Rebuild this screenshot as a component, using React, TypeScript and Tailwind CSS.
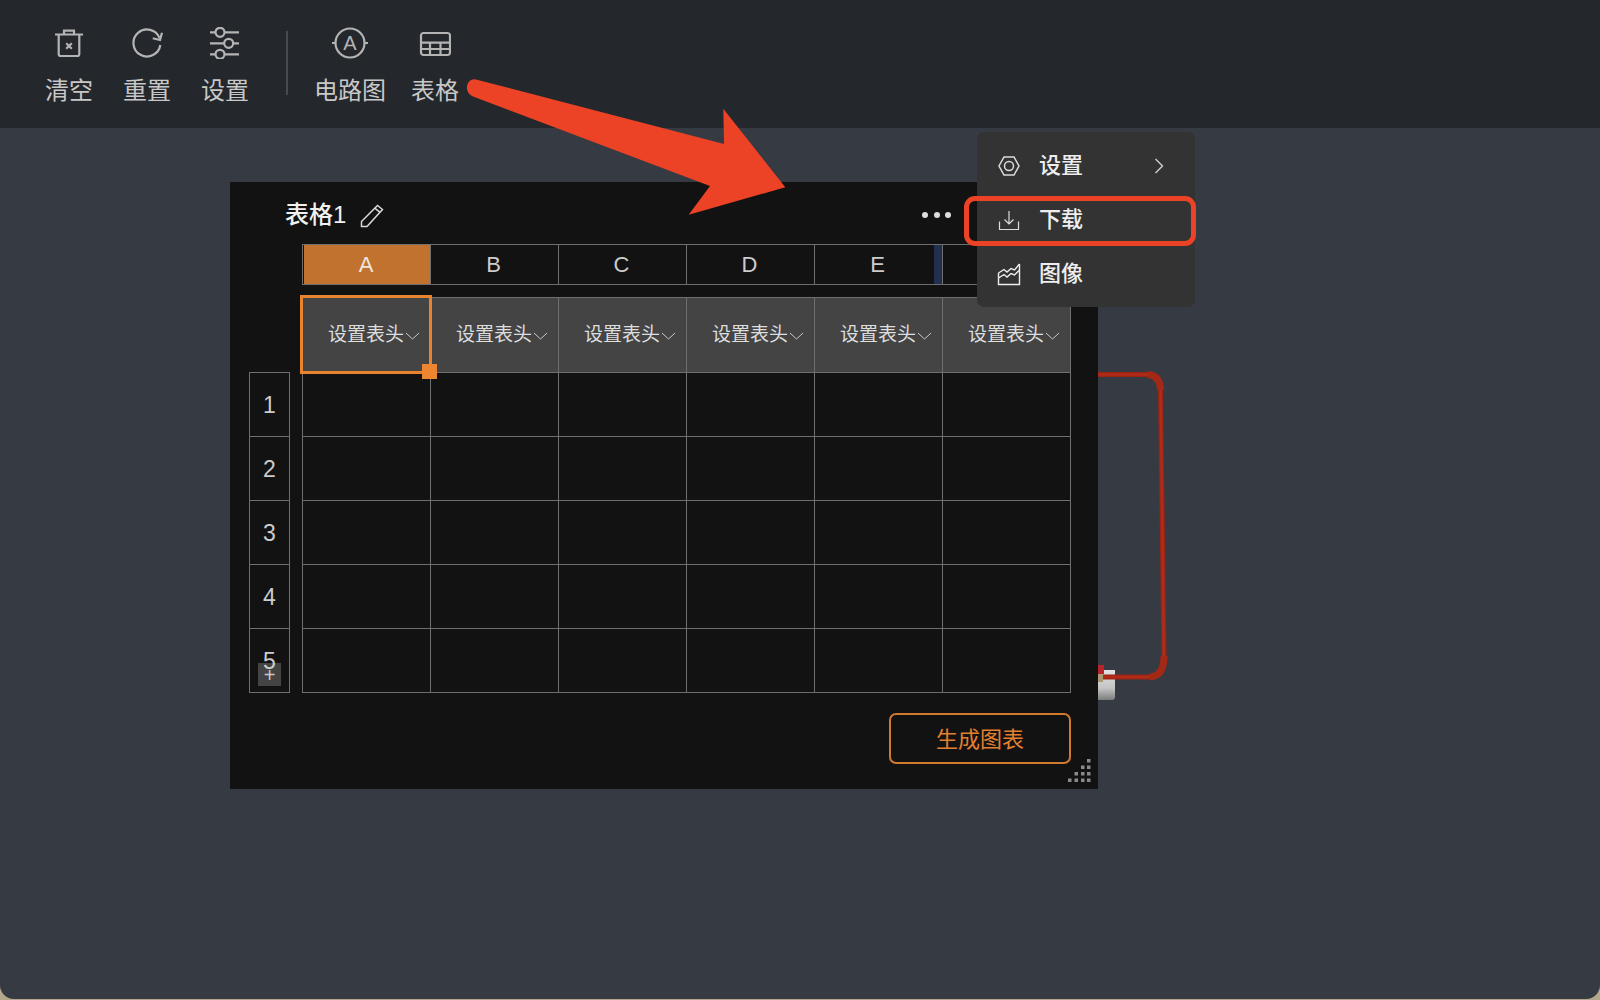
const columns = ['A', 'B', 'C', 'D', 'E', 'F']
const rows = [1, 2, 3, 4, 5]

const ToolbarIcon = {
  trash: (
    <svg width="32" height="32" viewBox="0 0 32 32" fill="none" stroke="#b4b4b4" strokeWidth="2.200">
      <path d="M2 7.500H30M11 7V3.600h10V7M5.700 7.500V27a2 2 0 0 0 2 2h16.600a2 2 0 0 0 2-2V7.500" />
      <path d="M13.200 16.200l5.600 5.600m0-5.600l-5.600 5.600" />
    </svg>
  ),
  reset: (
    <svg width="32" height="32" viewBox="0 0 32 32" fill="none" stroke="#b4b4b4" strokeWidth="2.200">
      <path d="M28.500 11A13.500 13.500 0 1 0 29.300 18" />
      <path d="M31 5.700L29 13l-7.300-1.700" />
    </svg>
  ),
  sliders: (
    <svg width="32" height="32" viewBox="0 0 32 32" fill="none" stroke="#b4b4b4" strokeWidth="2.200">
      <path d="M1 5.300h5.500M15.500 5.300H30M1 16.300h14.200M24.200 16.300H30M1 27.300h5.500M15.500 27.300H30" />
      <circle cx="11" cy="5.300" r="4.500" />
      <circle cx="19.700" cy="16.300" r="4.500" />
      <circle cx="11" cy="27.300" r="4.500" />
    </svg>
  ),
  circuit: (
    <svg width="40" height="32" viewBox="0 0 40 32" fill="none" stroke="#b4b4b4" strokeWidth="2.200">
      <circle cx="20" cy="16" r="14.500" />
      <path d="M2 16h3.500M34.500 16H38" />
      <text x="20" y="23" textAnchor="middle" fill="#b4b4b4" stroke="none" fontSize="20" fontFamily="Liberation Sans">
        A
      </text>
    </svg>
  ),
  table: (
    <svg width="32" height="32" viewBox="0 0 32 32" fill="none" stroke="#b4b4b4" strokeWidth="2.200">
      <rect x="2" y="6" width="29" height="22" rx="2.500" />
      <path d="M2 15.700h29M2 22h29M11 15.700V28M21.500 15.700V28" />
    </svg>
  ),
}

const toolGroups = [
  [
    { label: '清空', icon: ToolbarIcon.trash },
    { label: '重置', icon: ToolbarIcon.reset },
    { label: '设置', icon: ToolbarIcon.sliders },
  ],
  [
    { label: '电路图', icon: ToolbarIcon.circuit },
    { label: '表格', icon: ToolbarIcon.table },
  ],
]

function ToolButton({ label, icon }: { label: string; icon: React.ReactNode }) {
  return (
    <div className="flex flex-col items-center">
      <div className="flex h-[32px] items-center justify-center">{icon}</div>
      <span className="mt-[15px] text-[24px] leading-[34px] text-[#c8c8c8]">{label}</span>
    </div>
  )
}

function Toolbar() {
  return (
    <div className="flex h-[128px] items-start bg-[#24272c] pl-[45px] pt-[27px]">
      <div className="flex gap-[30px]">
        {toolGroups[0].map((t) => (
          <ToolButton key={t.label} {...t} />
        ))}
      </div>
      <div className="ml-[37px] mr-[26px] mt-[4px] h-[64px] w-[2px] bg-[#474a4f]" />
      <div className="flex gap-[25px]">
        {toolGroups[1].map((t) => (
          <ToolButton key={t.label} {...t} />
        ))}
      </div>
    </div>
  )
}

function TablePanel() {
  return (
    <div className="relative ml-[230px] mt-[54px] flex h-[607px] w-[868px] flex-col bg-[#121212]">
      {/* title */}
      <div className="flex h-[62px] items-center pl-[55px] pt-[4px]">
        <span className="text-[24px] font-medium leading-none text-[#f0f0f0]">表格1</span>
        <svg className="ml-[14px] mt-[2px]" width="24" height="24" viewBox="0 0 24 24" fill="none" stroke="#d8d8d8" strokeWidth="1.500">
          <path d="M1.500 22.500V17.500L17.500 1.500L22.500 5.500L7 22.500Z" />
          <path d="M14.800 4.200l5 4" />
        </svg>
        <div className="ml-[538px] flex gap-[5.300px]">
          <span className="size-[6px] rounded-full bg-[#dddddd]" />
          <span className="size-[6px] rounded-full bg-[#dddddd]" />
          <span className="size-[6px] rounded-full bg-[#dddddd]" />
        </div>
      </div>

      <div className="flex">
        {/* row numbers */}
        <div className="relative z-10 w-[72px] pl-[19px] pt-[128px]">
          <div className="w-[41px] border-x border-t border-[#6f6f6f]">
            {rows.map((n) => (
              <div
                key={n}
                className="flex h-[64px] items-center justify-center border-b border-[#6f6f6f] pt-[2px] text-[23px] text-[#cccccc]"
              >
                {n}
              </div>
            ))}
          </div>
        </div>

        <div className="w-[769px]">
          {/* column letters */}
          <div className="flex h-[41px] border-y border-l border-[#6f6f6f]">
            {columns.map((c) => (
              <div
                key={c}
                className={
                  c === 'A'
                    ? 'ml-px flex w-[127px] items-center justify-center border-r border-[#6f6f6f] bg-[#c2722f] pr-[2px] text-[22px] text-[#f0e6dc]'
                    : 'relative flex w-[128px] items-center justify-center border-r border-[#6f6f6f] pr-[2px] text-[22px] text-[#cccccc]'
                }
              >
                {c}
                {c === 'E' && <span className="absolute right-0 top-0 h-full w-[8px] bg-[#22304f]" />}
              </div>
            ))}
          </div>

          {/* header row */}
          <div className="mt-[12px] flex h-[76px] border-y border-l border-[#6f6f6f]">
            {columns.map((c) => (
              <div
                key={c}
                className="flex w-[128px] items-center border-r border-[#6f6f6f] bg-[#444444] pl-[25px] pt-[1px] text-[19px] text-[#dedede]"
              >
                设置表头
                <svg className="ml-px" width="15" height="8" viewBox="0 0 15 8" fill="none" stroke="#c8c8c8" strokeWidth="1">
                  <path d="M1 1l6.500 6L14 1" />
                </svg>
              </div>
            ))}
          </div>

          {/* body */}
          <div className="border-l border-[#6f6f6f]">
            {rows.map((n) => (
              <div key={n} className="flex h-[64px]">
                {columns.map((c) => (
                  <div key={c} className="w-[128px] border-b border-r border-[#6f6f6f]" />
                ))}
              </div>
            ))}
          </div>
        </div>
      </div>

      <button
        type="button"
        className="ml-[659px] mt-[20px] flex h-[51px] w-[182px] items-center justify-center rounded-[7px] border-2 border-[#d07a30] pt-px text-[22px] text-[#e2802f]"
      >
        生成图表
      </button>

      {/* selected header cell */}
      <div className="absolute left-[70px] top-[113px] h-[79px] w-[132px] border-[3px] border-[#e8842f]" />
      <div className="absolute left-[192px] top-[182px] size-[15px] bg-[#ee8530]" />

      {/* add row */}
      <div className="absolute left-[28px] top-[481px] flex size-[23px] items-center justify-center bg-[#444444] text-[20px] leading-none text-[#c8c8c8]">
        +
      </div>

      {/* resize grip */}
      <svg className="absolute left-[838px] top-[577px]" width="24" height="24" viewBox="0 0 24 24" fill="#8a8a8a">
        <rect x="19" y="0" width="3.500" height="3.500" />
        <rect x="13" y="6.500" width="3.500" height="3.500" />
        <rect x="19" y="6.500" width="3.500" height="3.500" />
        <rect x="6.500" y="13" width="3.500" height="3.500" />
        <rect x="13" y="13" width="3.500" height="3.500" />
        <rect x="19" y="13" width="3.500" height="3.500" />
        <rect x="0" y="19.500" width="3.500" height="3.500" />
        <rect x="6.500" y="19.500" width="3.500" height="3.500" />
        <rect x="13" y="19.500" width="3.500" height="3.500" />
        <rect x="19" y="19.500" width="3.500" height="3.500" />
      </svg>
    </div>
  )
}

const menuItems = [
  {
    label: '设置',
    icon: (
      <svg width="24" height="24" viewBox="0 0 24 24" fill="none" stroke="#dcdcdc" strokeWidth="1.500">
        <path d="M7 3h10l5 9-5 9H7l-5-9z" />
        <circle cx="12" cy="12" r="4.500" />
      </svg>
    ),
  },
  {
    label: '下载',
    icon: (
      <svg width="24" height="24" viewBox="0 0 24 24" fill="none" stroke="#dcdcdc" strokeWidth="1.200">
        <path d="M2.500 13.500V21.500h19V13.500" />
        <path d="M12 3v13M7.500 11.500L12 16l4.500-4.500" />
      </svg>
    ),
  },
  {
    label: '图像',
    icon: (
      <svg width="24" height="24" viewBox="0 0 24 24" fill="none" stroke="#eeeeee" strokeWidth="1.400">
        <path d="M1.500 11v11.500h21V2" />
        <path d="M1.500 11L7 7.500l3 2.500 4-3.500 3.500 1.500 5-6" />
        <path d="M1.500 16l5.500-3.500 3 2.500 4-3.500 3.500 1.500 5-5" />
      </svg>
    ),
  },
]

function FloatingMenu() {
  return (
    <div className="absolute left-[977px] top-[132px] flex h-[175px] w-[218px] flex-col justify-center rounded-[7px] bg-[#333333]">
      {menuItems.map((m) => (
        <div key={m.label} className="flex h-[54px] items-center pl-[20px] text-[22px] font-medium text-[#eeeeee]">
          {m.icon}
          <span className="ml-[18px]">{m.label}</span>
          {m.label === '设置' && (
            <svg className="ml-[71px]" width="10" height="16" viewBox="0 0 10 16" fill="none" stroke="#d0d0d0" strokeWidth="1.400">
              <path d="M1.500 1l7 7-7 7" />
            </svg>
          )}
        </div>
      ))}
    </div>
  )
}

export default function App() {
  return (
    <div className="relative h-[1000px] w-[1600px] overflow-hidden bg-[#b3a88a] font-['Liberation_Sans','Noto_Sans_CJK_SC',sans-serif]">
      <div className="h-[999px] overflow-hidden rounded-b-[14px] bg-[#363a43]">
        <Toolbar />

        {/* wire behind the panel */}
        <svg className="absolute left-0 top-0" width="1600" height="1000" fill="none">
          <defs>
            <linearGradient id="block" x1="0" y1="0" x2="0" y2="1">
              <stop offset="0" stopColor="#e2e2e2" />
              <stop offset="0.6" stopColor="#c4c4c4" />
              <stop offset="1" stopColor="#7d7d7d" />
            </linearGradient>
          </defs>
          <path d="M1098 670h17v27a3 3 0 0 1-3 3h-14z" fill="url(#block)" />
          <path d="M1098 374.500H1146Q1160 374.500 1160.500 388L1164 660Q1164 677 1150 677H1103" stroke="#9c2415" strokeWidth="5" />
          <path d="M1098 374.500H1146Q1160 374.500 1160.500 388L1164 660Q1164 677 1150 677H1103" stroke="#b02c19" strokeWidth="2.500" />
          <path d="M1148 374.500Q1160 375 1160.500 390M1164 656Q1164 676 1150 677" stroke="#a32816" strokeWidth="7" />
          <rect x="1098" y="665" width="6" height="9" fill="#b8242a" />
          <rect x="1098" y="674" width="5" height="8" fill="#a89a70" />
        </svg>

        <TablePanel />
      </div>

      <FloatingMenu />

      {/* highlight round the download item */}
      <div className="absolute left-[964px] top-[196px] h-[50px] w-[232px] rounded-[11px] border-[5px] border-[#ec4225]" />

      {/* annotation arrow */}
      <svg className="absolute left-0 top-0" width="1600" height="1000" fill="#ec4225">
        <path d="M476 79.500L724 144L723.300 108.700L785.300 187.300L688.700 214.700L710 186L473 96.500Q466 93 467 86Q469 78 476 79.500Z" />
      </svg>
    </div>
  )
}
